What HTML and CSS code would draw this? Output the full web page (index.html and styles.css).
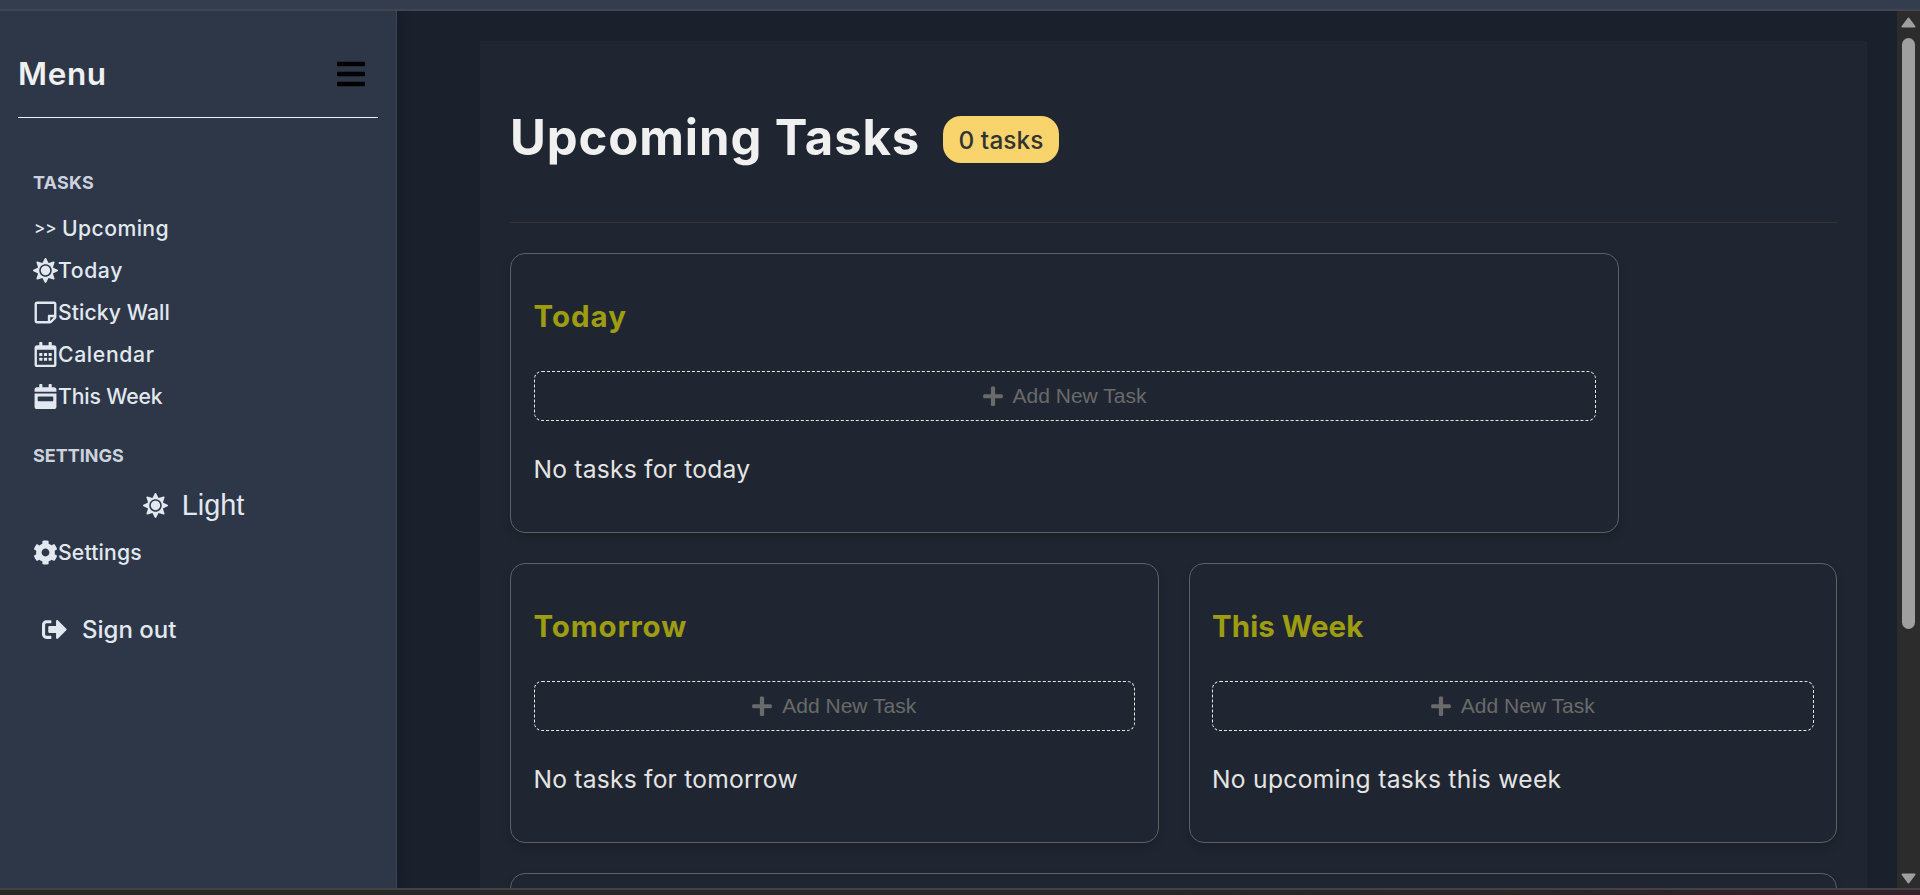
FILE: index.html
```html
<!DOCTYPE html>
<html lang="en">
<head>
<meta charset="utf-8">
<title>Upcoming Tasks</title>
<link rel="stylesheet" href="styles.css">
</head>
<body>
<svg class="sprite" aria-hidden="true">
  <symbol id="sun" viewBox="0 0 512 512"><path d="M256 160c-52.9 0-96 43.1-96 96s43.1 96 96 96 96-43.1 96-96-43.1-96-96-96zm246.4 80.5l-94.7-47.3 33.5-100.4c4.5-13.6-8.4-26.5-21.9-21.9l-100.4 33.5-47.4-94.8c-6.4-12.8-24.6-12.8-31 0l-47.3 94.7L92.7 70.8c-13.6-4.5-26.5 8.4-21.9 21.9l33.5 100.4-94.7 47.4c-12.8 6.4-12.8 24.6 0 31l94.7 47.3-33.5 100.5c-4.5 13.6 8.4 26.5 21.9 21.9l100.4-33.5 47.3 94.7c6.4 12.8 24.6 12.8 31 0l47.3-94.7 100.4 33.5c13.6 4.5 26.5-8.4 21.9-21.9l-33.5-100.4 94.7-47.3c13-6.5 13-24.7.2-31.1zm-155.9 106c-49.9 49.9-131.1 49.9-181 0-49.9-49.9-49.9-131.1 0-181 49.9-49.9 131.1-49.9 181 0 49.9 49.9 49.9 131.1 0 181z"/></symbol>
  <symbol id="note" viewBox="0 0 448 512"><path d="M448 348.106V80c0-26.51-21.49-48-48-48H48C21.49 32 0 53.49 0 80v351.988c0 26.51 21.49 48 48 48h268.118a48 48 0 0 0 33.941-14.059l83.882-83.882A48 48 0 0 0 448 348.106zm-128 80.006v-76.118h76.118L320 428.112zM400 80v223.988H296c-13.255 0-24 10.745-24 24v104H48V80h352z"/></symbol>
  <symbol id="calendar" viewBox="0 0 448 512"><path d="M448 112v352c0 26.5-21.5 48-48 48H48c-26.5 0-48-21.5-48-48V112c0-26.5 21.5-48 48-48h48V12c0-6.6 5.4-12 12-12h40c6.6 0 12 5.4 12 12v52h128V12c0-6.6 5.4-12 12-12h40c6.6 0 12 5.4 12 12v52h48c26.5 0 48 21.5 48 48zm-48 346V160H48v298c0 3.3 2.7 6 6 6h340c3.3 0 6-2.7 6-6z"/><rect x="96" y="224" width="64" height="64" rx="12"/><rect x="192" y="224" width="64" height="64" rx="12"/><rect x="288" y="224" width="64" height="64" rx="12"/><rect x="96" y="320" width="64" height="64" rx="12"/><rect x="192" y="320" width="64" height="64" rx="12"/><rect x="288" y="320" width="64" height="64" rx="12"/></symbol>
  <symbol id="week" viewBox="0 0 448 512"><path d="M0 464c0 26.5 21.5 48 48 48h352c26.5 0 48-21.5 48-48V192H0v272zm64-192c0-8.8 7.2-16 16-16h288c8.8 0 16 7.2 16 16v64c0 8.8-7.2 16-16 16H80c-8.8 0-16-7.2-16-16v-64zM400 64h-48V16c0-8.8-7.2-16-16-16h-32c-8.8 0-16 7.2-16 16v48H160V16c0-8.8-7.2-16-16-16h-32c-8.8 0-16 7.2-16 16v48H48C21.5 64 0 85.5 0 112v48h448v-48c0-26.5-21.5-48-48-48z"/></symbol>
  <symbol id="cog" viewBox="0 0 512 512"><path d="M487.4 315.7l-42.6-24.6c4.3-23.2 4.3-47 0-70.2l42.6-24.6c4.9-2.8 7.1-8.6 5.5-14-11.1-35.6-30-67.8-54.7-94.6-3.8-4.1-10-5.1-14.8-2.3L380.8 110c-17.9-15.4-38.5-27.3-60.8-35.1V25.8c0-5.6-3.9-10.5-9.4-11.7-36.7-8.2-74.3-7.8-109.2 0-5.5 1.2-9.4 6.1-9.4 11.7V75c-22.2 7.9-42.8 19.8-60.8 35.1L88.7 85.5c-4.9-2.8-11-1.9-14.8 2.3-24.7 26.7-43.6 58.9-54.7 94.6-1.7 5.4.6 11.2 5.5 14L67.3 221c-4.3 23.2-4.3 47 0 70.2l-42.6 24.6c-4.9 2.8-7.1 8.6-5.5 14 11.1 35.6 30 67.8 54.7 94.6 3.8 4.1 10 5.1 14.8 2.3l42.6-24.6c17.9 15.4 38.5 27.3 60.8 35.1v49.2c0 5.6 3.9 10.5 9.4 11.7 36.7 8.2 74.3 7.8 109.2 0 5.5-1.2 9.4-6.1 9.4-11.7v-49.2c22.2-7.9 42.8-19.8 60.8-35.1l42.6 24.6c4.9 2.8 11 1.9 14.8-2.3 24.7-26.7 43.6-58.9 54.7-94.6 1.5-5.5-.7-11.3-5.6-14.1zM256 336c-44.1 0-80-35.9-80-80s35.9-80 80-80 80 35.9 80 80-35.9 80-80 80z"/></symbol>
  <symbol id="exit" viewBox="0 0 512 512"><path d="M497 273L329 441c-15 15-41 4.5-41-17v-96H152c-13.3 0-24-10.7-24-24v-96c0-13.3 10.7-24 24-24h136V88c0-21.4 25.9-32 41-17l168 168c9.3 9.4 9.3 24.6 0 34zM192 436v-40c0-6.6-5.4-12-12-12H96c-17.7 0-32-14.3-32-32V160c0-17.7 14.3-32 32-32h84c6.6 0 12-5.4 12-12V76c0-6.6-5.4-12-12-12H96c-53 0-96 43-96 96v192c0 53 43 96 96 96h84c6.6 0 12-5.4 12-12z"/></symbol>
  <symbol id="bars" viewBox="0 0 448 512"><rect y="60" width="448" height="72" rx="16"/><rect y="220" width="448" height="72" rx="16"/><rect y="380" width="448" height="72" rx="16"/></symbol>
  <symbol id="plus" viewBox="0 0 448 512"><path d="M416 208H272V64c0-17.67-14.33-32-32-32h-32c-17.67 0-32 14.33-32 32v144H32c-17.67 0-32 14.33-32 32v32c0 17.67 14.33 32 32 32h144v144c0 17.67 14.33 32 32 32h32c17.67 0 32-14.33 32-32V304h144c17.67 0 32-14.33 32-32v-32c0-17.67-14.33-32-32-32z"/></symbol>
</svg>
<div class="window">
  <div class="topbar"></div>
  <div class="page">
    <aside class="sidebar">
      <header class="menu-head">
        <span class="menu-title">Menu</span>
        <svg class="bars"><use href="#bars"/></svg>
      </header>
      <nav class="nav">
        <h3 class="group tasks-label">TASKS</h3>
        <a class="link current"><span class="marker">&gt;&gt;</span><span class="t-upcoming">Upcoming</span></a>
        <a class="link"><svg class="icon"><use href="#sun"/></svg><span class="t-today">Today</span></a>
        <a class="link"><svg class="icon"><use href="#note"/></svg><span class="t-sticky">Sticky Wall</span></a>
        <a class="link"><svg class="icon"><use href="#calendar"/></svg><span class="t-calendar">Calendar</span></a>
        <a class="link"><svg class="icon"><use href="#week"/></svg><span class="t-week">This Week</span></a>
        <h3 class="group settings-label">SETTINGS</h3>
        <button class="theme"><svg class="icon"><use href="#sun"/></svg><span>Light</span></button>
        <a class="link"><svg class="icon"><use href="#cog"/></svg><span class="t-settings">Settings</span></a>
        <a class="signout"><svg class="icon"><use href="#exit"/></svg><span>Sign out</span></a>
      </nav>
    </aside>
    <main class="main">
      <section class="panel">
        <header class="title-row">
          <h1 class="title">Upcoming Tasks</h1>
          <span class="badge">0 tasks</span>
        </header>
        <div class="cards">
          <article class="card today">
            <h2 class="card-title">Today</h2>
            <button class="add"><svg class="plus"><use href="#plus"/></svg><span>Add New Task</span></button>
            <p class="empty">No tasks for today</p>
          </article>
          <article class="card tomorrow">
            <h2 class="card-title">Tomorrow</h2>
            <button class="add"><svg class="plus"><use href="#plus"/></svg><span>Add New Task</span></button>
            <p class="empty">No tasks for tomorrow</p>
          </article>
          <article class="card week">
            <h2 class="card-title">This Week</h2>
            <button class="add"><svg class="plus"><use href="#plus"/></svg><span>Add New Task</span></button>
            <p class="empty">No upcoming tasks this week</p>
          </article>
          <article class="card wide"></article>
        </div>
      </section>
    </main>
    <div class="scrollbar">
      <svg class="arrow" viewBox="0 0 15 11"><path d="M7.5 1.5L13.5 9.5H1.5z"/></svg>
      <div class="thumb"></div>
      <svg class="arrow down" viewBox="0 0 15 11"><path d="M7.5 9.5L1.5 1.5H13.5z"/></svg>
    </div>
  </div>
  <div class="bottombar"></div>
</div>
</body>
</html>
```
FILE: styles.css
```css
* { box-sizing: border-box; }
html, body { margin: 0; height: 100%; overflow: hidden; }
body { background: #1a202c; font-family: Inter, "Open Sans", sans-serif; color: #e2e8f0; }
h1, h2, h3, p { margin: 0; }
button { border: 0; background: none; padding: 0; color: inherit; font-family: "Liberation Sans", Arial, sans-serif; }
svg { fill: currentColor; flex: none; }
.sprite { position: absolute; width: 0; height: 0; }

.window { height: 895px; display: flex; flex-direction: column; overflow: hidden; }
.topbar { flex: none; height: 11px; background: #343d4e; border-bottom: 2px solid #414650; }
.page { flex: 1; min-height: 0; display: flex; overflow: hidden; }
.bottombar { flex: none; height: 7px; background: linear-gradient(90deg, #272727 60%, #2b2325 85%, #38202a); border-top: 2px solid #434343; }

.sidebar { position: relative; flex: none; width: 397px; padding: 0 18px; background: #2d3748; border-right: 1px solid #3a4558; box-shadow: 2px 0 12px rgba(0, 0, 0, .2); }
.menu-head { height: 107px; padding: 20px 13px 0 0; display: flex; align-items: center; justify-content: space-between; border-bottom: 1px solid #f0f0f0; }
.menu-title { font-size: 31.5px; line-height: 36px; font-weight: 600; letter-spacing: .6px; color: #f0f0f0; }
.bars { width: 28px; height: 32px; color: #000; }
.nav { padding: 0 15px; display: flex; flex-direction: column; }
.group { font-size: 18px; line-height: 24px; font-weight: 700; color: #cbd2de; }
.tasks-label { margin: 53px 0 12px; letter-spacing: .2px; }
.settings-label { margin: 27px 0 0; }
.link { height: 42px; display: flex; align-items: center; font-size: 21.2px; font-weight: 500; white-space: nowrap; }
.icon { width: 25px; height: 25px; }
.marker { width: 29px; padding-left: 1px; font-size: 17px; }
.t-upcoming { letter-spacing: .4px; }
.t-today { letter-spacing: .6px; }
.t-sticky { letter-spacing: .08px; }
.t-calendar { letter-spacing: .65px; }
.t-week { letter-spacing: -.15px; }
.t-settings { letter-spacing: .15px; }
.theme { height: 74px; padding-right: 9px; display: flex; align-items: center; justify-content: center; gap: 14px; font-size: 28.8px; line-height: 36px; }
.theme + .link { margin-top: -11px; }
.signout { margin-top: 38px; padding-left: 9px; height: 36px; display: flex; align-items: center; gap: 15px; font-size: 24px; font-weight: 500; }

.main { flex: 1; min-width: 0; padding: 30px 30px 0 83px; background: #1a202c; }
.panel { height: 100%; padding: 0 30px; background: #202631; }
.title-row { height: 182px; padding-top: 12px; display: flex; align-items: center; gap: 23px; border-bottom: 1px solid #34332f; }
.title { width: 410px; font-size: 49px; line-height: 60px; font-weight: 700; letter-spacing: .9px; color: #f0f0f0; white-space: nowrap; }
.badge { height: 47px; width: 116px; margin-top: 4px; display: flex; align-items: center; justify-content: center; border-radius: 18px; background: #f9d36b; color: #333; font-size: 24.4px; font-weight: 500; letter-spacing: .1px; white-space: nowrap; }
.cards { padding-top: 30px; display: grid; grid-template-columns: 1fr 1fr; gap: 30px; }
.card { height: 280px; padding: 0 22.5px; border: 1px solid #5b616b; border-radius: 15px; box-shadow: 0 4px 8px rgba(0, 0, 0, .2); }
.card.today { grid-column: 1 / -1; width: 1109px; }
.card.wide { grid-column: 1 / -1; }
.card-title { padding-top: 44px; font-size: 29.5px; line-height: 36px; font-weight: 700; color: #9e9d10; }
.today .card-title { letter-spacing: 1px; }
.tomorrow .card-title { letter-spacing: .85px; }
.week .card-title { letter-spacing: .05px; }
.add { width: 100%; height: 50px; margin-top: 37px; display: flex; align-items: center; justify-content: center; gap: 10px; border: 1px dashed #e8e8e8; border-radius: 8px; font-size: 21px; color: #6a6a6a; }
.plus { width: 20px; height: 22.5px; }
.empty { margin-top: 30px; font-size: 24.6px; line-height: 36px; letter-spacing: .22px; color: #e4e4e4; white-space: nowrap; }
.week .empty { letter-spacing: .3px; }

.scrollbar { flex: none; width: 23px; padding: 6px 0 4px; background: #2c2c2c; display: flex; flex-direction: column; align-items: center; }
.arrow { width: 15px; height: 11px; color: #9f9f9f; stroke: #9f9f9f; stroke-width: 2; stroke-linejoin: round; }
.thumb { width: 13px; height: 591px; margin-top: 10px; border-radius: 7px; background: #9f9f9f; }
.arrow.down { margin-top: auto; }
```
